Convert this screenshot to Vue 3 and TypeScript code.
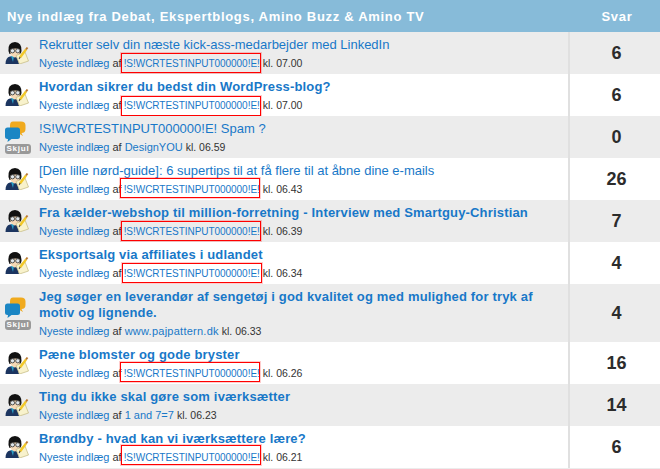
<script setup lang="ts">
interface Box { x: number; y: number }
interface Row { title: string; bold: boolean; by: string; box: Box | null; time: string; count: number; hide: boolean; wide?: boolean }
const mark = '!S!WCRTESTINPUT000000!E!'
const rows: Row[] = [
  { title: 'Rekrutter selv din næste kick-ass-medarbejder med LinkedIn', bold: false, by: mark, box: { x: 121, y: 21 }, time: '07.00', count: 6, hide: false },
  { title: 'Hvordan sikrer du bedst din WordPress-blog?', bold: true, by: mark, box: { x: 121, y: 22 }, time: '07.00', count: 6, hide: false },
  { title: '!S!WCRTESTINPUT000000!E! Spam ?', bold: false, by: 'DesignYOU', box: null, time: '06.59', count: 0, hide: true },
  { title: '[Den lille nørd-guide]: 6 supertips til at få flere til at åbne dine e-mails', bold: false, by: mark, box: { x: 120, y: 20 }, time: '06.43', count: 26, hide: false },
  { title: 'Fra kælder-webshop til million-forretning - Interview med Smartguy-Christian', bold: true, by: mark, box: { x: 121, y: 21 }, time: '06.39', count: 7, hide: false },
  { title: 'Eksportsalg via affiliates i udlandet', bold: true, by: mark, box: { x: 122, y: 21 }, time: '06.34', count: 4, hide: false },
  { title: 'Jeg søger en leverandør af sengetøj i god kvalitet og med mulighed for tryk af motiv og lignende.', bold: true, by: 'www.pajpattern.dk', box: null, time: '06.33', count: 4, hide: true, wide: true },
  { title: 'Pæne blomster og gode bryster', bold: true, by: mark, box: { x: 120, y: 20 }, time: '06.26', count: 16, hide: false },
  { title: 'Ting du ikke skal gøre som iværksætter', bold: true, by: '1 and 7=7', box: null, time: '06.23', count: 14, hide: false },
  { title: 'Brøndby - hvad kan vi iværksættere lære?', bold: true, by: mark, box: { x: 121, y: 19 }, time: '06.21', count: 6, hide: false },
]
</script>

<template>
  <div class="list">
    <div class="head">
      <div class="head-title">Nye indlæg fra Debat, Ekspertblogs, Amino Buzz &amp; Amino TV</div>
      <div class="head-count">Svar</div>
    </div>
    <div v-for="(r, i) in rows" :key="i" class="row" :class="{ odd: i % 2 === 0 }">
      <div class="icon-cell">
        <svg v-if="!r.hide" width="24" height="22" viewBox="0 0 24 22">
          <path d="M0.500 22 Q0.500 15.500 5 14.500 L10 14 Q13 15 14 22 Z" fill="#1c3560"/>
          <path d="M6 14 L9 14 L8 20 Z" fill="#2aa0c8"/>
          <path d="M3.500 9 Q2.500 0.500 10 0 Q17 0.500 16.500 9 L15.500 12 L4.500 12 Z" fill="#111"/>
          <path d="M5 8 Q10 5.500 15 7.500 L14.500 12 Q12 15.500 9.500 15.500 Q6.500 15 5.500 12 Z" fill="#f6d9b6"/>
          <circle cx="7.500" cy="8.800" r="2.100" fill="#dfe6ea" stroke="#444" stroke-width=".9"/>
          <circle cx="12.800" cy="8.800" r="2.100" fill="#dfe6ea" stroke="#444" stroke-width=".9"/>
          <path d="M11 13.500 L20 10 L23.500 19 L14.500 22 Z" fill="#f8f2cc" stroke="#c9bf8a" stroke-width=".8"/>
          <path d="M15 15.500 L21 7.500" stroke="#f2c828" stroke-width="2.400"/>
          <path d="M21 7.500 L22.500 5.500" stroke="#b9772f" stroke-width="2"/>
          <path d="M14.200 17 L15 15" stroke="#555" stroke-width="1.200"/>
        </svg>
        <template v-else>
          <svg width="21" height="21" viewBox="0 0 21 21">
            <path d="M8 0.500 H16 Q20.500 0.500 20.500 4.500 V8 Q20.500 12 16.500 12 L18 15 L13 12 H8 Q5 12 5 8 V4.500 Q5 0.500 8 0.500 Z" fill="#f0aa1e"/>
            <path d="M2.500 6.500 H12.500 Q15 6.500 15 9 V15.500 Q15 18 12.500 18 H6.500 L2.500 21 L3 18 H2.500 Q0 18 0 15.500 V9 Q0 6.500 2.500 6.500 Z" fill="#1b86c4"/>
          </svg>
          <span class="skjul">Skjul</span>
        </template>
      </div>
      <div class="main">
        <a class="title" :class="{ bold: r.bold }">{{ r.title }}</a>
        <div class="meta">
          <a class="link">Nyeste indlæg</a>
          af
          <a class="link" :class="{ small: r.box, wide: r.wide }">{{ r.by }}</a>
          <span class="time">kl. {{ r.time }}</span>
        </div>
      </div>
      <div class="count">{{ r.count }}</div>
      <span v-if="r.box" class="mark" :style="{ left: r.box.x + 'px', top: r.box.y + 'px' }"></span>
    </div>
  </div>
</template>

<style>
html, body { margin: 0; background: #fff; }
</style>

<style scoped>
.list {
  width: 660px;
  height: 469px;
  overflow: hidden;
  background: #ececec;
  font-family: "Liberation Sans", Arial, sans-serif;
}
.head {
  display: flex;
  height: 32px;
  align-items: center;
  background: #87bbd9;
  color: #fff;
  font-weight: bold;
  font-size: 13px;
  letter-spacing: 0.7px;
}
.head-title { width: 569px; padding-left: 7px; box-sizing: border-box; }
.head-count { width: 91px; text-align: center; padding-left: 5px; box-sizing: border-box; }
.row {
  display: flex;
  position: relative;
  min-height: 42px;
  background: #fff;
  box-sizing: border-box;
}
.row.odd { background: #ececec; }
.icon-cell {
  width: 39px;
  flex: none;
  display: flex;
  flex-direction: column;
  align-items: flex-start;
  justify-content: center;
  padding-left: 5px;
  box-sizing: border-box;
}
.icon-cell svg { display: block; }
.skjul {
  margin-top: 2px;
  width: 26px;
  height: 10px;
  line-height: 10px;
  border-radius: 3px;
  background: #999;
  color: #fff;
  font-size: 8px;
  font-weight: bold;
  letter-spacing: 0.8px;
  text-align: center;
}
.main {
  width: 531px;
  flex: none;
  padding: 5px 20px 0 0;
  box-sizing: border-box;
  border-right: 2px solid #e0e0e0;
}
.title {
  display: block;
  color: #1878c8;
  font-size: 13px;
  line-height: 16px;
}
.title.bold { font-weight: bold; letter-spacing: 0.17px; }
.meta {
  margin-top: 4px;
  font-size: 11px;
  line-height: 13px;
  color: #333;
  padding-bottom: 4px;
}
.link { color: #1878c8; }
.small { font-size: 10px; margin-left: -1px; letter-spacing: -0.04px; }
.wide { letter-spacing: 0.25px; }
.time { font-size: 10.5px; margin-left: 3px; }
.count {
  flex: 1;
  display: flex;
  align-items: center;
  justify-content: center;
  font-size: 18px;
  font-weight: bold;
  color: #2c2c2c;
  padding-left: 3px;
}
.mark {
  position: absolute;
  width: 140px;
  height: 20px;
  box-sizing: border-box;
  border: 1px solid #f00;
  box-shadow: 0 0 0 1px rgba(255, 0, 0, 0.2);
}
</style>
